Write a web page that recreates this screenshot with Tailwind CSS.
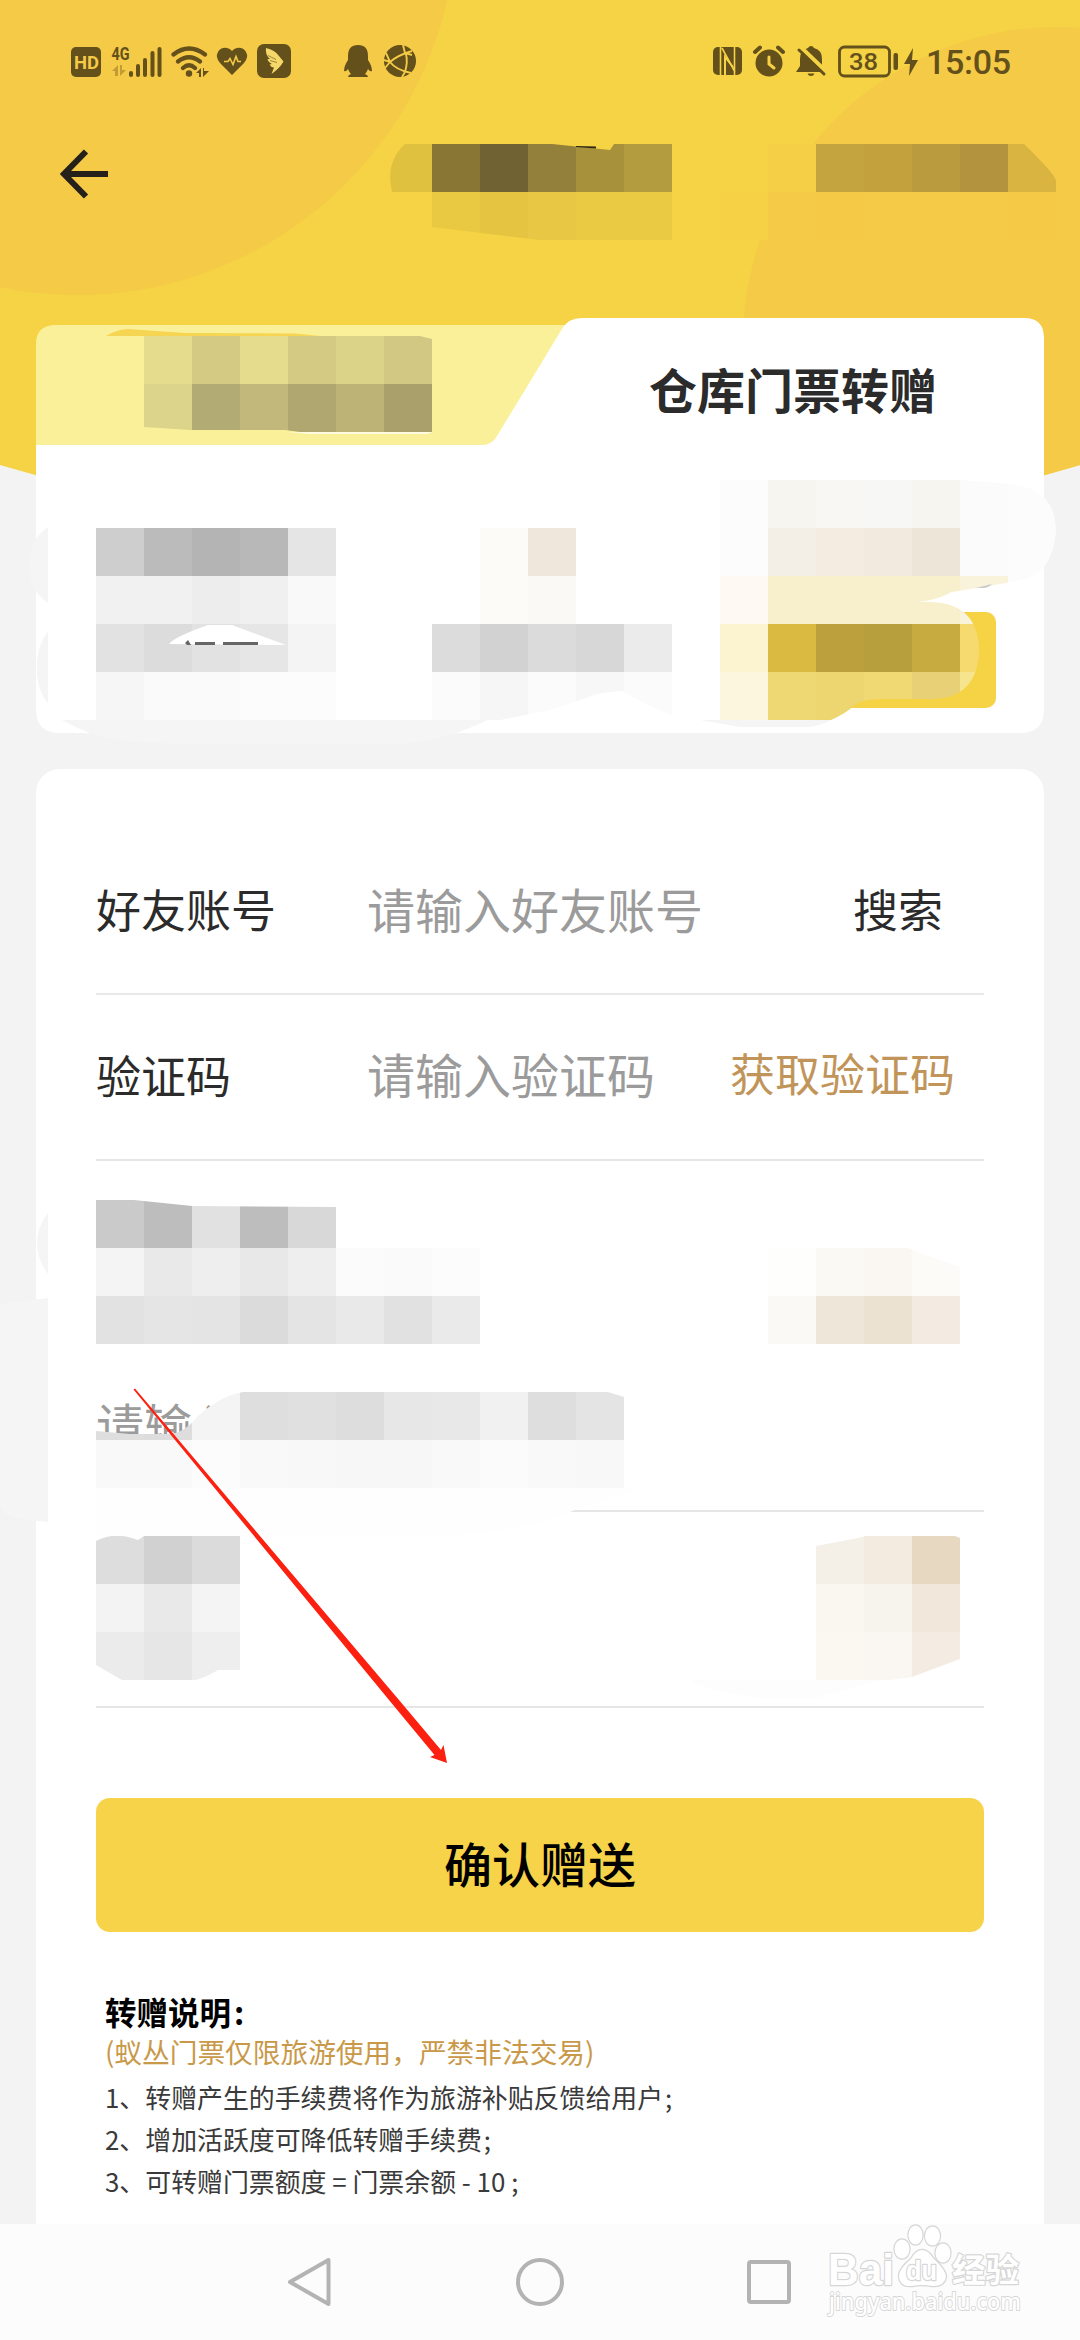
<!DOCTYPE html>
<html lang="zh-CN">
<head>
<meta charset="utf-8">
<title>仓库门票转赠</title>
<script src="https://cdn.jsdelivr.net/npm/@tailwindcss/browser@4"></script>
</head>
<body class="bg-[#f3f3f3]">
<div class="relative flex h-[2340px] w-[1080px] flex-col overflow-hidden bg-[#f3f3f3] font-['Noto_Sans_CJK_SC',sans-serif] text-[#2b2b2b]">

  <!-- header backdrop -->
  <svg class="absolute left-0 top-0" width="1080" height="520" viewBox="0 0 1080 520">
    <defs><clipPath id="hd"><path d="M0 0H1080V465Q540 625 0 465Z"/></clipPath></defs>
    <g clip-path="url(#hd)">
      <rect width="1080" height="520" fill="#f6d245"/>
      <circle cx="77" cy="-85" r="380" fill="#f5ca47"/>
      <circle cx="1058" cy="342" r="315" fill="#f5ca47"/>
    </g>
  </svg>

  <!-- status bar -->
  <div class="relative flex h-[124px] shrink-0 items-center justify-between pl-[71px] pr-[70px]">
    <svg width="346" height="36" viewBox="71 44 346 36" fill="#63501b">
      <rect x="71" y="47" width="30" height="30" rx="5"/>
      <text x="74" y="69" font-family="Roboto" font-weight="700" font-size="19" textLength="25" lengthAdjust="spacingAndGlyphs" fill="#f5ca47">HD</text>
      <text x="111.500" y="60" font-family="Roboto" font-weight="700" font-size="19" textLength="18" lengthAdjust="spacingAndGlyphs">4G</text>
      <g fill="#c39b34"><path d="M112 71l6-6v11h-3v-5zM120 65h2v5h4l-6 6z"/></g>
      <g stroke="#63501b" stroke-width="4" stroke-linecap="round"><path d="M131 73v2M138 66v9M145 60v15M152.500 53v22M159.500 49v26"/></g>
      <g fill="none" stroke="#63501b" stroke-width="4.200" stroke-linecap="round"><path d="M173.500 54.500Q189 42.500 205 54.500M178 61.500Q189 53 200 61.500M183 68Q189 62.500 195 68"/></g>
      <circle cx="189" cy="73.500" r="3.200"/>
      <path d="M196 73l5-5v9h-2v-4zM203 68l1 0v3h5l-6 6z"/>
      <path d="M232 75L220 63Q215 57 218 52Q221 47 227 48Q230 48.500 232 51Q234 48.500 237 48Q243 47 246 52Q249 57 244 63Z"/>
      <path d="M224 61.500h4l2-3 3 6 3-8 2 5h3" fill="none" stroke="#f5ca47" stroke-width="1.600"/>
      <rect x="257" y="44" width="34" height="34" rx="7"/>
      <path d="M266 48Q275 50 279 56L283.500 61.500Q280 68 271.500 74L274 67.500Q270.500 67 269.500 64.500L272 64Q268 62 267.500 59L270 59Q265 55 266 48Z" fill="#f5d76a"/>
      <path d="M268 55.500l8 4M270 60.500l7 2" stroke="#63501b" stroke-width=".6"/>
      <path d="M358 45q10 0 10 11v4q4 6 4 11q-2 1-4-2q-1 3-3 5q3 1 3 3h-20q0-2 3-3q-2-2-3-5q-2 3-4 2q0-5 4-11v-4q0-11 10-11z"/>
      <circle cx="400" cy="61" r="16"/>
      <g stroke="#f5ca47" stroke-width="1.900" fill="none"><path d="M384 60L390 62Q398 55 412 51M390 62Q396 70 411 73M406 54Q408 62 405 72M390 62L385 68M390 62L386 53M403 45L405 53L412 55M402 77L405 72"/></g>
    </svg>
    <div class="flex items-center">
      <svg width="208" height="36" viewBox="712 44 208 36" fill="#63501b">
        <rect x="712" y="47" width="29" height="28" rx="5"/>
        <path d="M719.500 47v28M721 48L734 72M733.500 47v28" stroke="#f6d245" stroke-width="1.600" fill="none"/>
        <path d="M724 75V57L732 67" stroke="#f6d245" stroke-width="2" fill="none"/>
        <path d="M724 51L731 60V48" stroke="#63501b" stroke-width="1" fill="none"/>
        <circle cx="768" cy="63" r="13.500"/>
        <path d="M754 52l5-4.500M782 52l-5-4.500" stroke="#63501b" stroke-width="4" stroke-linecap="round"/>
        <path d="M768 57v7l5 4" stroke="#f6d245" stroke-width="3" fill="none" stroke-linecap="round"/>
        <path d="M810 46q2 0 3 2q8 2 8 11v8l3 5h-29l4-6v-7q0-9 8-11q1-2 3-2zM806.500 73.500h7q-1 2.500-3.500 2.500t-3.500-2.500z"/>
        <path d="M799 46.500l27 26" stroke="#f6d245" stroke-width="4.500"/>
        <path d="M798 50l25 24" stroke="#63501b" stroke-width="3" stroke-linecap="round"/>
        <rect x="838.500" y="47" width="50" height="29" rx="5" fill="none" stroke="#63501b" stroke-width="2.800"/>
        <text x="848" y="69.500" font-family="Roboto" font-weight="500" font-size="24" textLength="29" lengthAdjust="spacingAndGlyphs">38</text>
        <rect x="892.500" y="53" width="4.500" height="17" rx="2"/>
        <path d="M912 48l-9 16h6l-1 12 9-16h-6z"/>
      </svg>
      <span class="ml-[5px] h-[40px] w-[84px] whitespace-nowrap font-[Roboto] text-[34px] font-medium leading-[40px] tracking-[-0.3px] text-[#63501b]">15:05</span>
    </div>
  </div>

  <!-- title bar -->
  <div class="relative flex h-[100px] shrink-0 items-center pl-[60px]">
    <svg width="48" height="50" viewBox="0 0 48 50" fill="none" stroke="#25211a" stroke-width="6"><path d="M48 25H4M26 2.500L4 25L26 47.500"/></svg>
  </div>

  <!-- ticket card -->
  <section class="relative mx-[36px] mt-[94px] h-[415px] shrink-0">
    <svg class="absolute left-0 top-0" width="1008" height="415" viewBox="0 0 1008 415">
      <path d="M0 26Q0 7 20 7H560V140H0Z" fill="#fbf09a"/>
      <path d="M0 127H446Q456 127 461 118L526 11Q532 0 546 0H988Q1008 0 1008 20V391Q1008 415 984 415H24Q0 415 0 391Z" fill="#fff"/>
    </svg>
    <div class="relative flex h-[146px] items-center pb-[6px]">
      <h1 class="ml-[613px] text-[48px] font-bold leading-[60px]">仓库门票转赠</h1>
    </div>
    <div class="relative ml-auto mr-[48px] mt-[148px] h-[96px] w-[250px] rounded-[10px] bg-[#f6d245]"></div>
  </section>

  <!-- form card -->
  <section class="relative mx-[36px] mt-[36px] flex h-[1455px] shrink-0 flex-col rounded-t-[24px] bg-white px-[60px] pt-[59px]">
    <div class="flex h-[167px] shrink-0 items-center border-b-[2px] border-[#e9e9e9] pb-[3px] text-[45px] leading-[60px]">
      <span class="w-[271px]">好友账号</span>
      <span class="w-[486px] pb-[3px] text-[48px] text-[#9b9b9b]">请输入好友账号</span>
      <span>搜索</span>
    </div>
    <div class="flex h-[166px] shrink-0 items-center border-b-[2px] border-[#e6e6e6] pb-[4px] text-[45px] leading-[60px]">
      <span class="w-[271px]">验证码</span>
      <span class="w-[363px] pb-[4px] text-[48px] text-[#9b9b9b]">请输入验证码</span>
      <span class="pb-[4px] text-[#c1955a]">获取验证码</span>
    </div>
    <div class="flex h-[351px] shrink-0 flex-col justify-end border-b-[2px] border-[#e6e6e6] pb-[57px]">
      <span class="text-[48px] leading-[60px] text-[#9b9b9b]">请输入</span>
    </div>
    <div class="h-[196px] shrink-0 border-b-[2px] border-[#e6e6e6]"></div>
    <button class="mt-[90px] h-[134px] shrink-0 rounded-[14px] bg-[#f6d348] pb-[6px] text-[48px] font-medium leading-[60px] text-black">确认赠送</button>
    <div class="mt-[59px] shrink-0 whitespace-nowrap pl-[9px] text-[25.900px] leading-[42px] text-[#3a3a3a]">
      <p class="h-[40px] text-[31.500px] font-bold leading-[40px] text-black">转赠说明<span class="pl-[3px]">:</span></p>
      <p class="h-[45px] text-[27.700px] leading-[40px] text-[#c9994a]">(蚁丛门票仅限旅游使用，严禁非法交易)</p>
      <p>1、转赠产生的手续费将作为旅游补贴反馈给用户<span class="pl-[2px]">;</span></p>
      <p>2、增加活跃度可降低转赠手续费<span class="pl-[2px]">;</span></p>
      <p>3、可转赠门票额度 = 门票余额 - 10 ;</p>
    </div>
  </section>

  <!-- system navigation -->
  <nav class="relative flex h-[116px] shrink-0 items-center bg-[#fcfcfc]">
    <svg class="ml-[286px]" width="48" height="52" viewBox="0 0 48 52" fill="none" stroke="#b3b3b3" stroke-width="4" stroke-linejoin="round"><path d="M42.500 4V48L4 26Z"/></svg>
    <svg class="ml-[180px]" width="52" height="52" viewBox="0 0 52 52" fill="none" stroke="#b3b3b3" stroke-width="4"><circle cx="26" cy="26" r="22"/></svg>
    <svg class="ml-[181px]" width="44" height="44" viewBox="0 0 44 44" fill="none" stroke="#b3b3b3" stroke-width="4"><rect x="2" y="2" width="40" height="40" rx="2"/></svg>
  </nav>

  <!-- pixelated areas, pointer arrow and watermark lie over the page -->
  <svg class="absolute left-0 top-0" width="1080" height="2340" viewBox="0 0 1080 2340">
    <defs>
      <clipPath id="c-title"><path d="M405 144H552L610 150L614 144H672V240H540L432 227V192H392Q385 162 405 144Z"/></clipPath>
      <clipPath id="c-head"><path d="M720 144H1024Q1056 175 1056 181V240H768V262H720Z"/></clipPath>
      <clipPath id="c-tab"><path d="M144 336H420L432 339V432H300L285 430H190L144 427Z"/></clipPath>
      <clipPath id="c-mid"><path d="M432 520H672V715Q645 705 622 691Q600 692 588 697Q560 708 540 712L500 720H432Z"/></clipPath>
      <clipPath id="c-right"><path d="M720 480H960L1010 484Q1056 488 1056 532Q1052 575 1020 580L990 586L952 592Q935 601 917 602H932Q979 604 979 652Q977 698 932 699H880Q862 699 855 705Q845 714 831 720H720Z"/></clipPath>
      <clipPath id="c-acct"><path d="M96 1200H134L192 1206L336 1207V1248H480V1344H96Z"/></clipPath>
      <clipPath id="c-input"><path d="M96 1431L130 1434H172Q185 1432 198 1416Q220 1396 243 1392H608L624 1397V1488H96Z"/></clipPath>
      <clipPath id="c-small"><path d="M96 1541Q115 1531 138 1540L144 1536H240V1670H218Q205 1678 195 1680H122L96 1665Z"/></clipPath>
      <clipPath id="c-gold"><path d="M768 1248H907L960 1267V1344H768Z"/></clipPath>
      <clipPath id="c-gold2"><path d="M816 1546L858 1538L866 1536H955L960 1538V1659L912 1677L890 1680H816Z"/></clipPath>
    </defs>
    <path d="M48 527Q29 540 29 565T48 603ZM48 632Q37 645 37 668T48 703Z" fill="#f5f5f5"/>
    <path d="M62 720C90 735 110 744 200 744H400C440 742 470 728 488 720ZM700 720L740 727H810Q822 725 831 720Z" fill="#f5f5f5"/>
    <path d="M0 1304L48 1298V1522L36 1521Q0 1518 0 1505ZM48 1213Q37 1227 37 1243T48 1274Z" fill="#f5f5f5"/>
    <path d="M96 1488H640L572 1511Q540 1530 440 1536H96Z" fill="#fefefe"/>
    <path d="M690 1680H880L816 1698H760Q710 1692 690 1680Z" fill="#fdfdfd"/>
    <g id="cells" shape-rendering="crispEdges"></g>
    <path d="M106 336Q118 329 128 329L185 333L295 333.500L320 336Z" fill="#f6d552"/>
    <path d="M288 432H432L428 434H310Z" fill="#fffbe0"/>
    <path d="M576 146L596 146.500V148.500L576 147Z" fill="#2e2513"/>
    <path d="M169 644Q174 637 208 625H232L286 645Z" fill="#fff"/>
    <path d="M185 643l3-3 3 5h-4zM195 642h20v3h-20zM223 642h35v3h-35z" fill="#666"/>
    <path d="M976 588L992 584Q988 588 983 588Z" fill="#c9c9c9"/>

    <path d="M133.500 1389.500L135 1388.500L399 1700L441 1750L443.500 1745L447 1763L430 1757L434.500 1755L389 1700Z" fill="#fc2010"/>

    <g fill="#fff" stroke="#d6d6d6" stroke-width="2.400" paint-order="stroke" stroke-linejoin="round">
      <text x="828" y="2285" font-family="Liberation Sans" font-weight="700" font-size="45" textLength="66" lengthAdjust="spacingAndGlyphs">Bai</text>
      <ellipse cx="902" cy="2249" rx="7.500" ry="9.500"/>
      <ellipse cx="915.500" cy="2235" rx="7" ry="9.500"/>
      <ellipse cx="932.500" cy="2236" rx="7.500" ry="9.500"/>
      <ellipse cx="943" cy="2253" rx="7.500" ry="9.500"/>
      <path d="M922 2250Q928 2250 933 2258Q946 2270 946 2277Q944 2287 932 2286Q922 2284 912 2286Q899 2287 899 2275Q900 2268 911 2259Q916 2250 922 2250Z"/>
      <text x="906" y="2280" font-family="Liberation Sans" font-weight="700" font-size="27" textLength="31" lengthAdjust="spacingAndGlyphs">du</text>
      <text x="952" y="2282" font-family="Noto Sans CJK SC" font-weight="700" font-size="33" textLength="67" lengthAdjust="spacingAndGlyphs">经验</text>
      <text x="829" y="2310" font-family="Noto Sans" font-weight="500" font-size="23" textLength="192" lengthAdjust="spacingAndGlyphs" stroke-width="1.800">jingyan.baidu.com</text>
    </g>
  </svg>
</div>
<script>
  // each entry: clip id, x, y, colours of consecutive 48px cells
  const rows = [
    ['c-title',384,144,'e0c13f 897635 706233 93803a a7913b b39c3f'],
    ['c-title',432,192,'eac942 e5c441 e8c744 eaca43 eaca43'],
    ['c-head',768,144,'f5cf46 c4a43f c3a23d ba9c3e b3933d dab440'],
    ['c-head',720,192,'f6d045 f5ca46 f5c946 f5ca46 f5ca46 f5ca46 f5c946'],
    ['c-tab',144,336,'e5dc8e d4ca83 e5dc8e d4ca83 dbd387 d2c883'],
    ['c-tab',144,384,'ddd48b b3ab74 c2b87c afa670 bdb377 a9a06c'],
    ['',96,528,'cecece bbbbbb b4b4b4 b8b8b8 e5e5e5'],
    ['',96,576,'f1f1f1 f1f1f1 ededed f0f0f0 f9f9f9'],
    ['',96,624,'e2e2e2 dcdcdc e2e2e2 e6e6e6 f4f4f4'],
    ['',96,672,'f6f6f6 fafafa fafafa fcfcfc fcfcfc'],
    ['c-mid',480,528,'fcfbf7 f0e7dc'],
    ['c-mid',480,576,'fcfbf7 faf9f5'],
    ['c-mid',432,624,'dcdcdc d2d2d2 dbdbdb d7d7d7 ebebeb'],
    ['c-mid',432,672,'fbfbfb f6f6f6 fbfbfb f7f7f7 fbfbfb'],
    ['c-right',720,480,'fcfcfc f6f5f0 f8f7f4 f7f7f5 f6f5f0 fbfbfc fcfcfc'],
    ['c-right',720,528,'fcfcfc f3eee6 f4ece0 f2eadf ede5d7 fbfbfc fcfcfc'],
    ['c-right',720,576,'fefaf3 f8efcc f8efcc f8efcc f8efcc faf3dc fcfcfc'],
    ['c-right',720,624,'fcf3d0 daba41 bba03d b89f3e c8ab40 f6da70'],
    ['c-right',720,672,'fdf6de eed873 edd670 f0d972 e8d076 f7e48f'],
    ['c-acct',96,1200,'cacaca bdbdbd e1e1e1 bdbdbd d8d8d8'],
    ['c-acct',96,1248,'f4f4f4 e9e9e9 eeeeee e8e8e8 eeeeee fbfbfb fafafa fcfcfc'],
    ['c-acct',96,1296,'e2e2e2 e5e5e5 e4e4e4 dbdbdb e4e4e4 e9e9e9 e1e1e1 eaeaea'],
    ['c-input',96,1392,'dedede dddddd f4f4f4 dedede e0e0e0 dddddd e7e7e7 e8e8e8 f1f1f1 dedede e4e4e4'],
    ['c-input',96,1440,'f9f9f9 f9f9f9 fcfcfc f9f9f9 f8f8f8 f7f7f7 f7f7f7 f9f9f9 fbfbfb f9f9f9 f8f8f8'],
    ['c-small',96,1536,'dddddd d1d1d1 dbdbdb'],
    ['c-small',96,1584,'f3f3f3 e9e9e9 f4f4f4'],
    ['c-small',96,1632,'ebebeb e6e6e6 eeeeee'],
    ['c-gold',768,1248,'fefefc faf9f4 faf6f1 fcfbf7'],
    ['c-gold',768,1296,'faf9f5 eee6d9 ebe2d2 f3eae1'],
    ['c-gold2',816,1536,'f4f0e8 f3eae0 e6d8c1'],
    ['c-gold2',816,1584,'faf7f0 f6f4ec f1e7db'],
    ['c-gold2',816,1632,'fbf7f1 faf6f1 f4ece2']
  ];
  document.getElementById('cells').innerHTML = rows.map(([clip, x, y, cols]) =>
    '<g' + (clip ? ' clip-path="url(#' + clip + ')"' : '') + '>' +
    cols.split(' ').map((c, i) => '<rect x="' + (x + i * 48) + '" y="' + y + '" width="48" height="48" fill="#' + c + '"/>').join('') + '</g>').join('');
</script>
</body>
</html>
